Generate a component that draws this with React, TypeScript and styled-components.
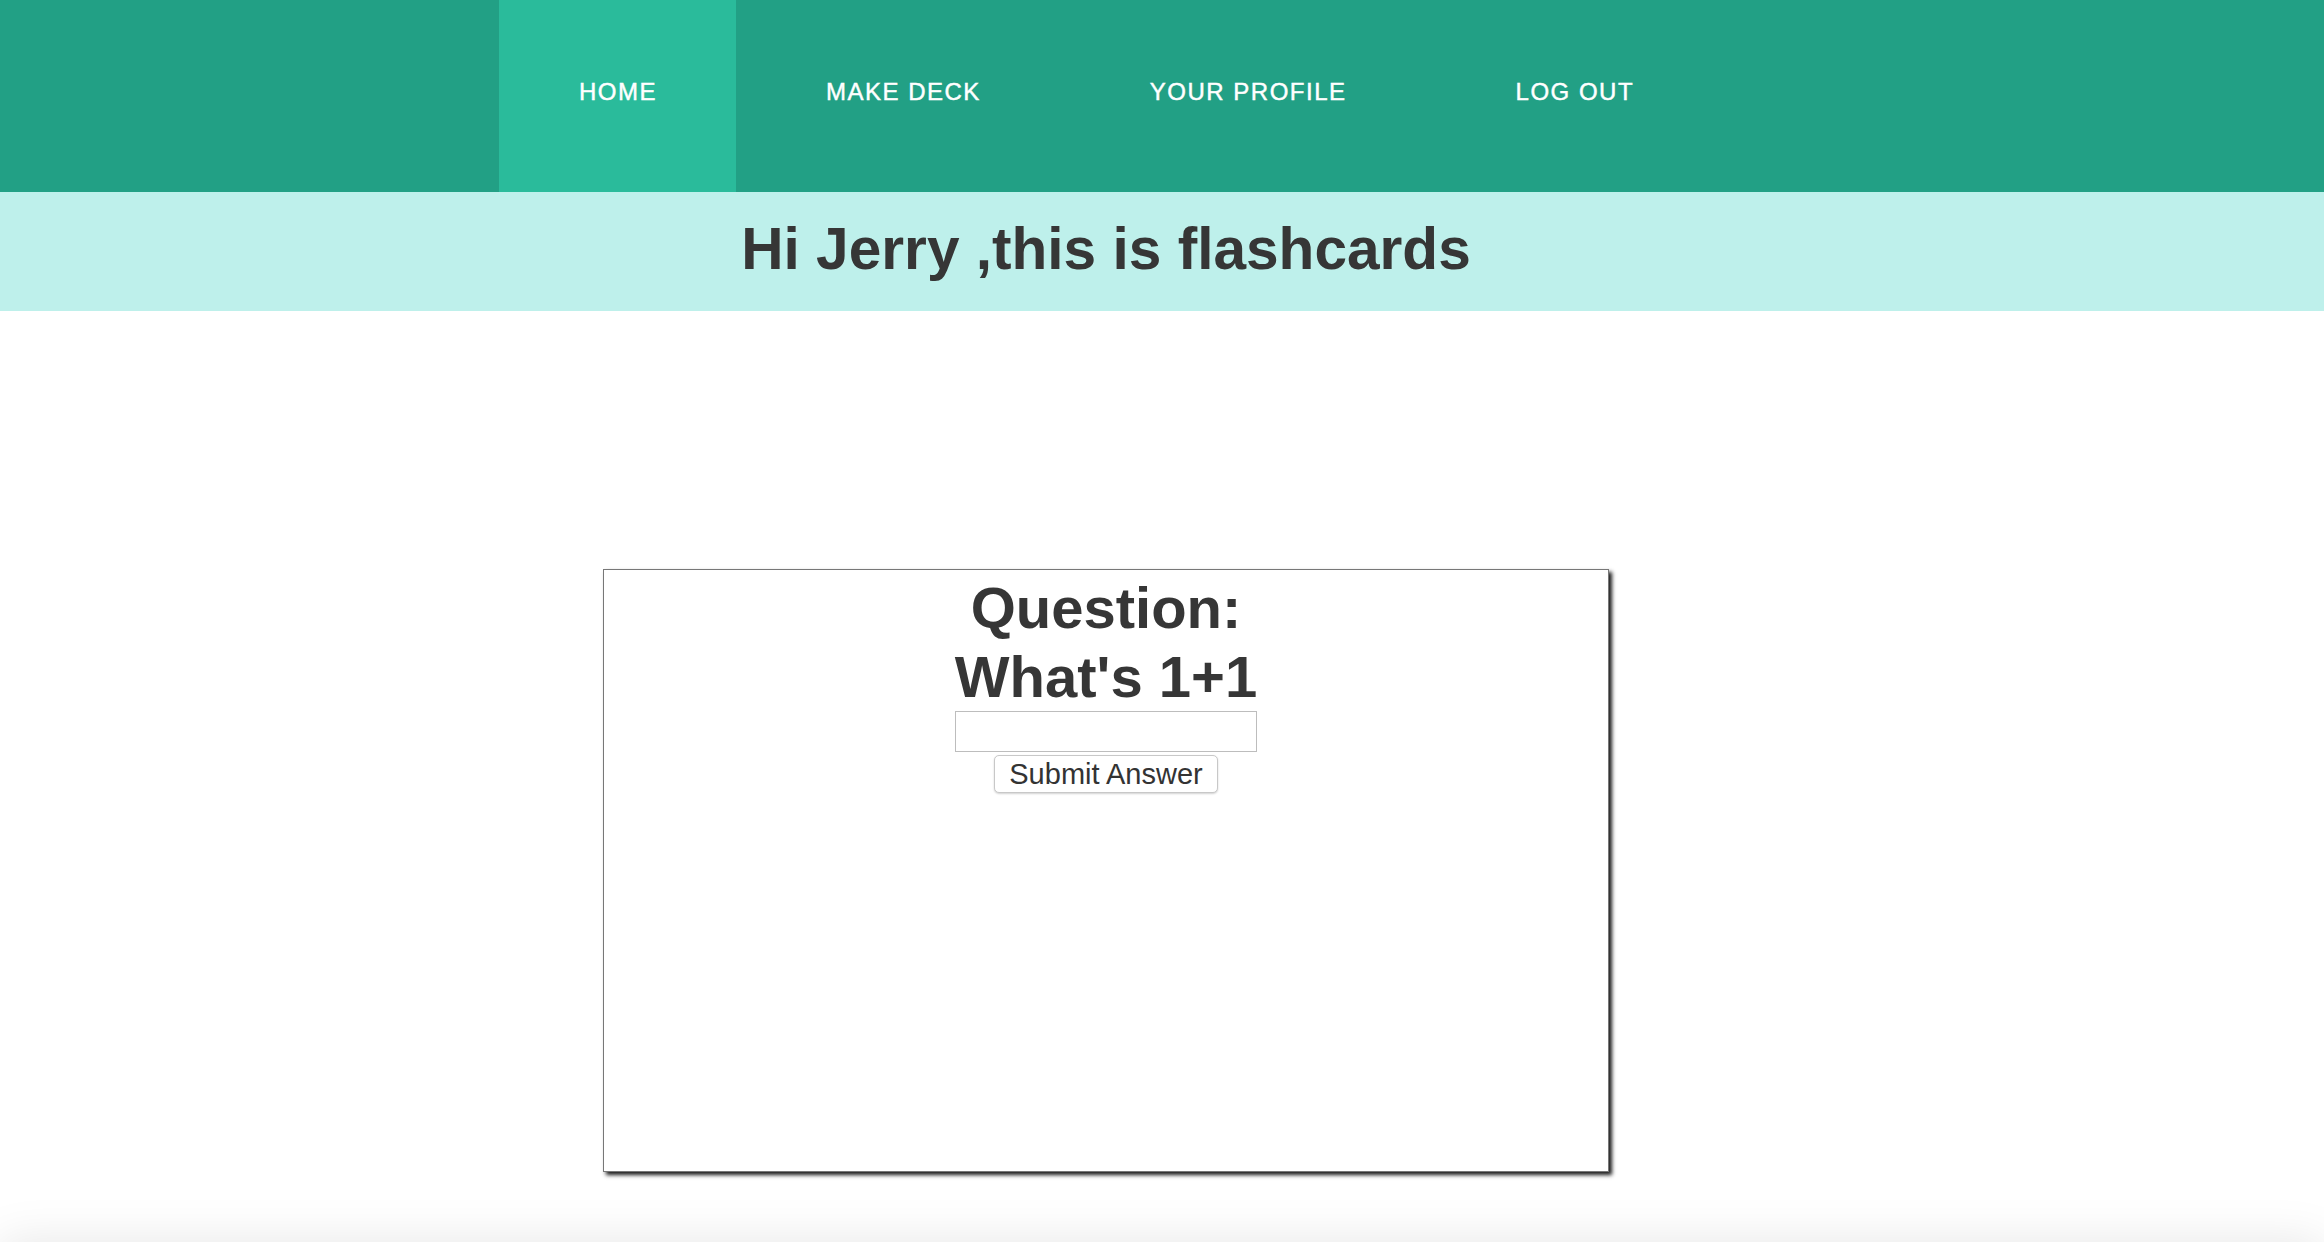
import React from "react";
import styled, { createGlobalStyle } from "styled-components";

const GlobalStyle = createGlobalStyle`
  html, body {
    margin: 0;
    padding: 0;
    background: #ffffff;
    font-family: "Liberation Sans", Helvetica, Arial, sans-serif;
    color: #363636;
  }
  body {
    overflow: hidden;
  }
`;

const Page = styled.div`
  display: flex;
  flex-direction: column;
  min-height: 100vh;
`;

const NavBar = styled.nav`
  background: #22a085;
  height: 192px;
`;

const NavList = styled.ul`
  list-style: none;
  margin: 0;
  padding: 0;
  width: calc(100% - 112px);
  height: 100%;
  display: flex;
  justify-content: center;
  gap: 10px;
`;

const NavItem = styled.li<{ $active?: boolean }>`
  background: ${(p) => (p.$active ? "#2abb9b" : "transparent")};
  padding: 80px 79px 0 80px;
  height: 100%;
  box-sizing: border-box;
  color: #ffffff;
  font-size: 24px;
  line-height: 24px;
  letter-spacing: 1.5px;
  -webkit-text-stroke: 0.45px #ffffff;
  text-transform: uppercase;
  white-space: nowrap;
  cursor: pointer;
`;

const Banner = styled.header`
  background: #bef0eb;
  height: 119px;
  box-sizing: border-box;
  padding-top: 23px;
`;

const BannerTitle = styled.h1`
  margin: 0;
  width: calc(100% - 112px);
  text-align: center;
  font-size: 58.6px;
  line-height: 67px;
  font-weight: 700;
  color: #363636;
`;

const Main = styled.main`
  width: calc(100% - 112px);
  display: flex;
  justify-content: center;
  padding-top: 258px;
`;

const Card = styled.section`
  width: 1006px;
  height: 603px;
  box-sizing: border-box;
  border: 1px solid #777777;
  box-shadow: 3px 3px 4px #1a1a1a;
  display: flex;
  flex-direction: column;
  align-items: center;
  padding-top: 3px;
  background: #ffffff;
`;

const Question = styled.h2`
  margin: 0;
  text-align: center;
  font-size: 58px;
  line-height: 69px;
  font-weight: 700;
  color: #363636;
`;

const AnswerInput = styled.input`
  width: 302px;
  height: 41px;
  box-sizing: border-box;
  border: 1px solid #bdbdbd;
  border-radius: 0;
  padding: 0 6px;
  font-family: "Liberation Sans", Helvetica, Arial, sans-serif;
  font-size: 24px;
  outline: none;
`;

const SubmitButton = styled.button`
  margin-top: 3px;
  width: 224px;
  height: 38px;
  box-sizing: border-box;
  border: 1px solid #c8c8c8;
  border-radius: 5px;
  background: #ffffff;
  box-shadow: 0 1px 2px rgba(0, 0, 0, 0.18);
  color: #333333;
  font-family: "Liberation Sans", Helvetica, Arial, sans-serif;
  font-size: 29px;
  line-height: 34px;
  padding: 0;
  cursor: pointer;
`;

const Footer = styled.footer`
  margin-top: 70px;
  height: 200px;
  background: #ffffff;
  box-shadow: 0 0 45px rgba(0, 0, 0, 0.1);
`;

const navItems = ["Home", "Make Deck", "Your Profile", "Log Out"];

export default function App() {
  return (
    <Page>
      <GlobalStyle />
      <NavBar>
        <NavList>
          {navItems.map((item, i) => (
            <NavItem key={item} $active={i === 0}>
              {item}
            </NavItem>
          ))}
        </NavList>
      </NavBar>
      <Banner>
        <BannerTitle>Hi Jerry ,this is flashcards</BannerTitle>
      </Banner>
      <Main>
        <Card>
          <Question>
            Question:
            <br />
            What's 1+1
          </Question>
          <AnswerInput type="text" />
          <SubmitButton type="button">Submit Answer</SubmitButton>
        </Card>
      </Main>
      <Footer />
    </Page>
  );
}
